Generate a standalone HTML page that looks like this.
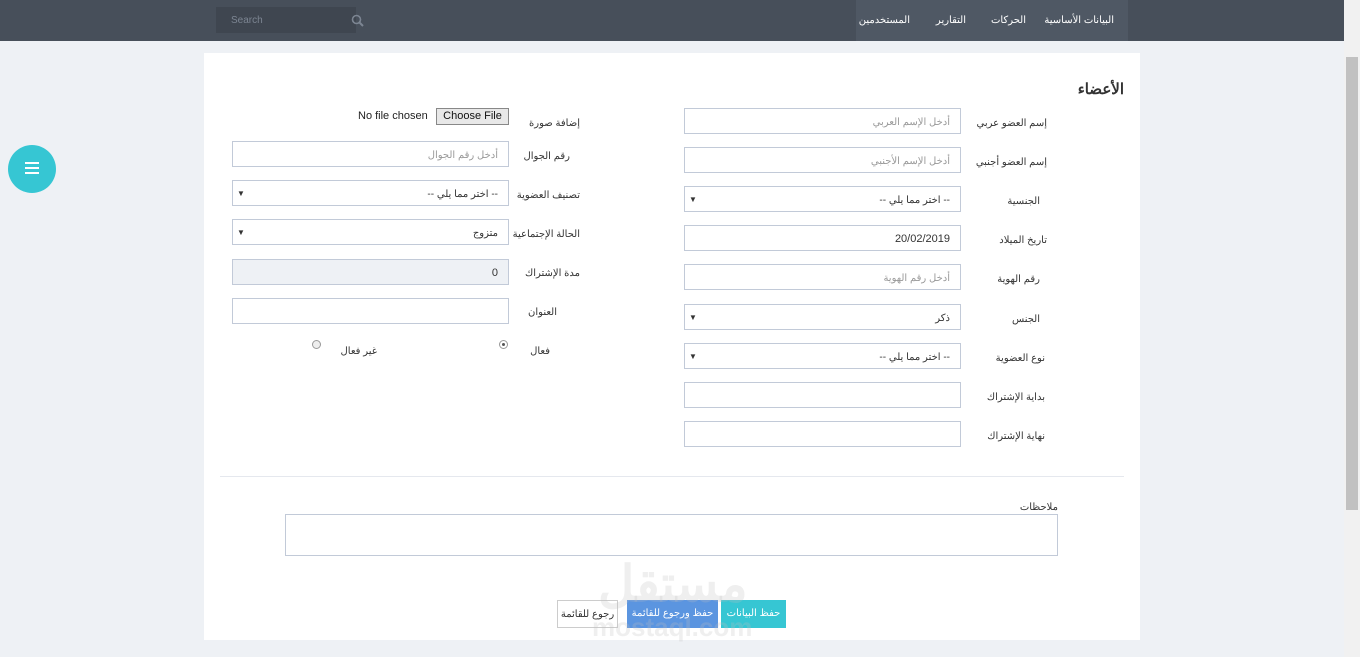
<!DOCTYPE html>
<html><head><meta charset="utf-8"><style>
*{box-sizing:border-box;margin:0;padding:0}
body{width:1360px;height:657px;background:#eef1f5;font-family:"Liberation Sans","Noto Sans CJK SC",sans-serif;position:relative;overflow:hidden;font-size:10px;color:#333}
.a{position:absolute}
.top{left:0;top:0;width:1344px;height:41px;background:#474f5a}
.nav{left:856px;top:0;width:272px;height:41px;background:#4f5864}
.nav span{position:absolute;top:15px;color:#fff;font-size:10px}
.panel{left:204px;top:53px;width:936px;height:587px;background:#fff}
.in{position:absolute;border:1px solid #c2cad8;background:#fff;height:26px;font-size:10px;color:#999;text-align:right;padding:8px 10px 0}
.lb{position:absolute;font-size:10px;color:#333;text-align:right;direction:rtl}
.sel{color:#333}
.sel:before{content:"▼";position:absolute;left:4px;top:8px;font-size:8px;color:#333}
.btn{position:absolute;top:600px;height:28px;font-size:10px;text-align:center;padding-top:8px}
</style></head><body>
<div class="a top"></div>
<div class="a" style="left:216px;top:7px;width:140px;height:26px;background:#3f4650;color:#7c8592;font-size:10px;padding:8px 15px">Search</div>
<svg class="a" style="left:351px;top:14px" width="14" height="14"><circle cx="5.5" cy="5.5" r="4" fill="none" stroke="#7c8592" stroke-width="1.6"/><line x1="8.5" y1="8.5" x2="12" y2="12" stroke="#7c8592" stroke-width="2"/></svg>
<div class="a nav"><span style="right:14px">البيانات الأساسية</span><span style="right:102px">الحركات</span><span style="right:162px">التقارير</span><span style="right:218px">المستخدمين</span></div>
<div class="a" style="left:1344px;top:0;width:16px;height:657px;background:#f1f1f1"></div>
<div class="a" style="left:1346px;top:57px;width:12px;height:453px;background:#c1c1c1"></div>
<div class="a panel"></div>
<div class="a" style="left:8px;top:145px;width:48px;height:48px;border-radius:50%;background:#36c6d3"></div>
<div class="a" style="left:25px;top:162px;width:14px;height:2px;background:#fff;box-shadow:0 5px 0 #fff,0 10px 0 #fff"></div>
<div class="lb" style="right:236px;top:80px;font-size:15px;font-weight:bold">الأعضاء</div>

<div class="in" style="left:684px;top:108px;width:277px">أدخل الإسم العربي</div>
<div class="in" style="left:684px;top:147px;width:277px">أدخل الإسم الأجنبي</div>
<div class="in sel" style="left:684px;top:186px;width:277px">-- اختر مما يلي --</div>
<div class="in" style="left:684px;top:225px;width:277px;color:#333;font-size:11px;padding-top:7px">20/02/2019</div>
<div class="in" style="left:684px;top:264px;width:277px">أدخل رقم الهوية</div>
<div class="in sel" style="left:684px;top:304px;width:277px">ذكر</div>
<div class="in sel" style="left:684px;top:343px;width:277px">-- اختر مما يلي --</div>
<div class="in" style="left:684px;top:382px;width:277px"></div>
<div class="in" style="left:684px;top:421px;width:277px"></div>
<div class="lb" style="right:313px;top:118px">إسم العضو عربي</div>
<div class="lb" style="right:313px;top:157px">إسم العضو أجنبي</div>
<div class="lb" style="right:320px;top:196px">الجنسية</div>
<div class="lb" style="right:313px;top:235px">تاريخ الميلاد</div>
<div class="lb" style="right:320px;top:274px">رقم الهوية</div>
<div class="lb" style="right:320px;top:314px">الجنس</div>
<div class="lb" style="right:315px;top:353px">نوع العضوية</div>
<div class="lb" style="right:315px;top:392px">بداية الإشتراك</div>
<div class="lb" style="right:315px;top:431px">نهاية الإشتراك</div>

<div class="a" style="left:358px;top:110px;font-size:11px;color:#222">No file chosen</div>
<div class="a" style="left:436px;top:108px;width:73px;height:17px;border:1px solid #888;background:#e8e8e8;font-size:11px;text-align:center;padding-top:1px;color:#111">Choose File</div>
<div class="in" style="left:232px;top:141px;width:277px">أدخل رقم الجوال</div>
<div class="in sel" style="left:232px;top:180px;width:277px">-- اختر مما يلي --</div>
<div class="in sel" style="left:232px;top:219px;width:277px">متزوج</div>
<div class="in" style="left:232px;top:259px;width:277px;background:#eef1f5;color:#333;font-size:11px;padding-top:7px">0</div>
<div class="in" style="left:232px;top:298px;width:277px"></div>
<div class="lb" style="right:780px;top:118px">إضافة صورة</div>
<div class="lb" style="right:790px;top:151px">رقم الجوال</div>
<div class="lb" style="right:780px;top:190px">تصنيف العضوية</div>
<div class="lb" style="right:780px;top:229px">الحالة الإجتماعية</div>
<div class="lb" style="right:780px;top:268px">مدة الإشتراك</div>
<div class="lb" style="right:803px;top:307px">العنوان</div>
<div class="lb" style="right:810px;top:346px">فعال</div>
<div class="lb" style="right:983px;top:346px">غير فعال</div>
<div class="a" style="left:499px;top:340px;width:9px;height:9px;border:1px solid #999;border-radius:50%;background:#fff"><div style="margin:2px;width:3px;height:3px;border-radius:50%;background:#555"></div></div>
<div class="a" style="left:312px;top:340px;width:9px;height:9px;border:1px solid #999;border-radius:50%;background:#eee"></div>

<div class="a" style="left:220px;top:476px;width:904px;height:1px;background:#e5e8ee"></div>
<div class="lb" style="right:302px;top:502px">ملاحظات</div>
<div class="a" style="left:285px;top:514px;width:773px;height:42px;border:1px solid #c2cad8"></div>
<div class="btn" style="left:557px;width:61px;border:1px solid #ccc;background:#fff;color:#333">رجوع للقائمة</div>
<div class="btn" style="left:627px;width:91px;background:#5b95e0;color:#fff">حفظ ورجوع للقائمة</div>
<div class="btn" style="left:721px;width:65px;background:#36c6d3;color:#fff">حفظ البيانات</div>
<div class="a" style="left:598px;top:555px;font-size:50px;font-weight:bold;color:rgba(190,190,190,.25)">مستقل</div>
<div class="a" style="left:592px;top:612px;font-size:26px;font-weight:bold;color:rgba(190,190,190,.25)">mostaql.com</div>
</body></html>
